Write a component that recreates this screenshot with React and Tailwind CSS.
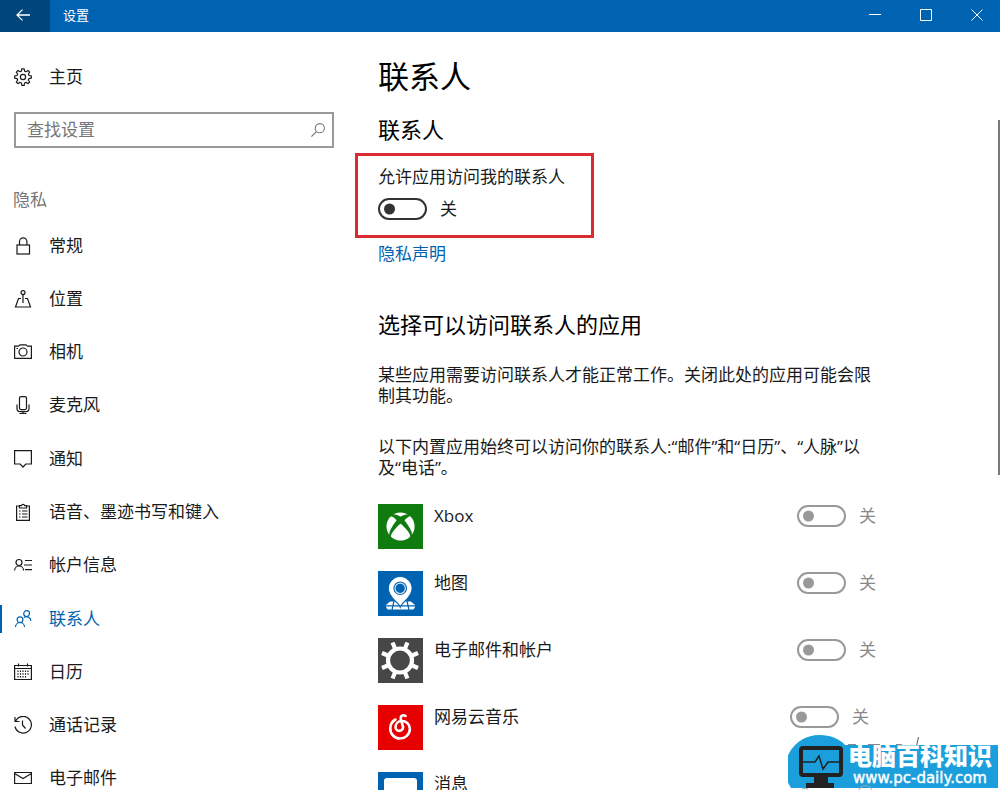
import React, { useState } from "react";
import { FaXbox } from "react-icons/fa";

const Icon = ({ children }) => (
  <svg
    viewBox="0 0 18 18"
    className="h-[18px] w-[18px] shrink-0"
    fill="none"
    stroke="currentColor"
    strokeWidth="1.2"
    aria-hidden="true"
  >
    {children}
  </svg>
);

const GearIcon = () => (
  <Icon>
    <circle cx="9" cy="9" r="2.6" />
    <path
      strokeLinejoin="round"
      d="M7.4 3.1 7.8.8h2.4l.4 2.3 1.5.6 1.9-1.3 1.7 1.7-1.4 1.9.7 1.5 2.3.4v2.3l-2.3.4-.7 1.5 1.4 1.9-1.7 1.7-1.9-1.4-1.5.7-.4 2.3H7.8L7.4 15l-1.5-.7L4 15.7 2.3 14l1.4-1.9-.7-1.5-2.3-.4V7.9l2.3-.4.7-1.5-1.4-1.9L4 2.4l1.9 1.3z"
    />
  </Icon>
);

const LockIcon = () => (
  <Icon>
    <rect x="3" y="8" width="12.5" height="9" />
    <path d="M5.5 8V4.5a3.7 3.7 0 0 1 7.4 0V8" />
  </Icon>
);

const LocationIcon = () => (
  <Icon>
    <circle cx="9" cy="2.6" r="2" />
    <path d="M9 4.6V13M7 8.5H4.5L1.500 17h15l-3-8.5H11" />
  </Icon>
);

const CameraIcon = () => (
  <Icon>
    <path d="M.6 3.1H4.5L6 1.8h6l1.5 1.3h3.9v12.3H.6z" />
    <circle cx="9" cy="9" r="4" />
    <path d="M2.5 5.5h1.5" />
  </Icon>
);

const MicIcon = () => (
  <Icon>
    <rect x="5.5" y=".6" width="7" height="13" rx="1.5" />
    <path d="M3 8.5v4.5a2.5 2.5 0 0 0 2.5 2.5h7a2.5 2.5 0 0 0 2.5-2.5V8.5M9 15.5v2M5.5 17.4h7" />
  </Icon>
);

const NotifyIcon = () => (
  <Icon>
    <path d="M.6.6h16.800v13.400h-5.600L9 17l-2.800-3H.6z" />
  </Icon>
);

const ClipboardIcon = () => (
  <Icon>
    <path d="M6 3H2.600v14.400h12.800V3H12M5.500 5V2.700h1.900a1.700 1.700 0 0 1 3.300 0h1.900V5z" />
    <path d="M5 8h1.500M8 8h5.500M5 11h1.500M8 11h5.500M5 14h1.500M8 14h5.500" />
  </Icon>
);

const AccountIcon = () => (
  <Icon>
    <circle cx="5" cy="6.500" r="3" />
    <path d="M.6 14.500a4.500 4.500 0 0 1 9 0M11 4.500h7M10 9h8M11 13.600h7" />
  </Icon>
);

const PeopleIcon = () => (
  <Icon>
    <circle cx="6" cy="9.700" r="2.900" />
    <path d="M1.500 17a4.500 4.500 0 0 1 9 0" />
    <circle cx="12.600" cy="3.600" r="2.900" />
    <path d="M9.800 7.600a4.400 4.400 0 0 1 7.100 3.400" />
  </Icon>
);

const CalendarIcon = () => (
  <Icon>
    <path d="M.6 2.500h16.800v14H.6zM.6 5.500h16.800M4.500.5v3M13.500.5v3" />
    <path strokeDasharray="1.5 1.2" d="M4 7.500v7.500M6.500 7.500v7.500M9 7.500v7.500M11.500 7.500v7.500M14 7.500v5" />
  </Icon>
);

const HistoryIcon = () => (
  <Icon>
    <path d="M1.700 5A8.300 8.300 0 1 1 1 10.500M1 1v4.500h4.500M8.500 4.500V9l3 3.500" />
  </Icon>
);

const MailIcon = () => (
  <Icon>
    <path d="M.6 3.500h16.800v11H.6zM.6 4.500 9 9.500l8.400-5" />
  </Icon>
);

const MapsLogo = () => (
  <svg viewBox="0 0 45 45" className="h-full w-full" aria-hidden="true">
    <path
      d="M12 31h21l4 3.500-1.500 3.500H9.500L8 34.500z"
      fill="#fff"
      stroke="#fff"
      strokeLinejoin="round"
    />
    <path d="M7 34.800h31M16 30l-2 9M29 30l2 9" stroke="#0063b1" strokeWidth="1.2" />
    <path
      d="M22.200 36c-1.500-5-12-9-12-18.500a12 12 0 0 1 24 0C34.200 27 23.700 31 22.200 36z"
      fill="#fff"
      stroke="#0063b1"
      strokeWidth="1.2"
    />
    <circle cx="22.2" cy="17.3" r="6.8" fill="#0063b1" />
    <circle cx="22.2" cy="17.3" r="5.2" fill="none" stroke="#d5e6f5" strokeWidth="1.2" />
  </svg>
);

const SettingsLogo = () => (
  <svg viewBox="0 0 45 45" className="h-full w-full" stroke="#fff" fill="none" aria-hidden="true">
    <circle cx="22" cy="22.5" r="12" strokeWidth="4.2" />
    {[22.5, 67.5, 112.5, 157.5, 202.5, 247.5, 292.5, 337.5].map((angle) => (
      <path key={angle} d="M22 10V3" strokeWidth="4.2" transform={`rotate(${angle} 22 22.5)`} />
    ))}
  </svg>
);

const MusicLogo = () => (
  <svg
    viewBox="0 0 45 45"
    className="h-full w-full"
    fill="none"
    stroke="#fff"
    strokeWidth="2.6"
    strokeLinecap="round"
    aria-hidden="true"
  >
    <path d="M17.500 14.500A10 10 0 0 0 12.300 23.500a9.800 9.800 0 0 0 19.600.5c0-5-3.800-8-8-8-4 0-6.400 2.800-6.400 6a3.800 3.800 0 0 0 7.600.2L22.800 14c-.5-3.500 2.200-4.700 4.800-3" />
  </svg>
);

const MessageLogo = () => (
  <svg viewBox="0 0 45 45" className="h-full w-full" aria-hidden="true">
    <path d="M9 6h27a3 3 0 0 1 3 3v20a3 3 0 0 1-3 3H20l-8 7v-7H9a3 3 0 0 1-3-3V9a3 3 0 0 1 3-3z" fill="#fff" />
  </svg>
);

const navItems = [
  { label: "常规", icon: LockIcon },
  { label: "位置", icon: LocationIcon },
  { label: "相机", icon: CameraIcon },
  { label: "麦克风", icon: MicIcon },
  { label: "通知", icon: NotifyIcon },
  { label: "语音、墨迹书写和键入", icon: ClipboardIcon },
  { label: "帐户信息", icon: AccountIcon },
  { label: "联系人", icon: PeopleIcon, active: true },
  { label: "日历", icon: CalendarIcon },
  { label: "通话记录", icon: HistoryIcon },
  { label: "电子邮件", icon: MailIcon },
];

const apps = [
  { id: "xbox", name: "Xbox", tile: "bg-[#107c10]", logo: <FaXbox className="h-[29px] w-[29px] text-white" /> },
  { id: "maps", name: "地图", tile: "bg-[#0063b1]", logo: <MapsLogo /> },
  { id: "mail", name: "电子邮件和帐户", tile: "bg-[#474747]", logo: <SettingsLogo /> },
  { id: "music", name: "网易云音乐", tile: "bg-[#e60000]", logo: <MusicLogo />, shifted: true },
  { id: "message", name: "消息", tile: "bg-[#0063b1]", logo: <MessageLogo />, noToggle: true },
];

const Toggle = ({ id, ...props }) => (
  <input
    id={id}
    type="checkbox"
    role="switch"
    className="relative h-[22px] w-[49px] shrink-0 appearance-none rounded-full border-2 border-[#333] before:absolute before:top-1/2 before:left-1 before:h-[11px] before:w-[11px] before:-translate-y-1/2 before:rounded-full before:bg-[#333] disabled:border-[#999] disabled:before:bg-[#999]"
    {...props}
  />
);

const TitleBar = () => (
  <header className="flex h-8 shrink-0 items-center bg-[#0063b1] text-white">
    <button aria-label="返回" className="flex h-full w-[50px] items-center justify-center bg-[#00457c] pr-1 pb-0.5">
      <svg viewBox="0 0 14 12" className="h-3 w-[14px]" fill="none" stroke="currentColor" strokeWidth="1.3">
        <path d="M14 6H1M6.500.6 1 6l5.500 5.400" />
      </svg>
    </button>
    <span className="ml-[13px] flex-1 pb-0.5 text-[13px]">设置</span>
    <div className="flex h-full gap-[5px]">
      <button aria-label="最小化" className="flex w-[46px] items-center justify-center pb-0.5">
        <svg viewBox="0 0 12 12" className="h-3 w-3" stroke="currentColor">
          <path d="M0 5.500h12" />
        </svg>
      </button>
      <button aria-label="最大化" className="flex w-[46px] items-center justify-center pb-0.5">
        <svg viewBox="0 0 12 12" className="h-3 w-3" fill="none" stroke="currentColor">
          <path d="M.5.5h11v11H.5z" />
        </svg>
      </button>
      <button aria-label="关闭" className="flex w-[46px] items-center justify-center pb-0.5">
        <svg viewBox="0 0 12 12" className="h-3 w-3" stroke="currentColor">
          <path d="M.5.5l11 11M11.500.5l-11 11" />
        </svg>
      </button>
    </div>
  </header>
);

const Sidebar = () => (
  <aside className="w-[348px] shrink-0 pt-[31px]">
    <a href="#home" className="flex h-7 items-center gap-[17px] pl-[14px]">
      <GearIcon />
      主页
    </a>
    <div className="relative mt-[21px] ml-[14px] w-80">
      <input
        type="text"
        aria-label="查找设置"
        placeholder="查找设置"
        className="block h-9 w-full border-2 border-[#999] pr-9 pb-0.5 pl-[11px] outline-none placeholder:text-[#767676]"
      />
      <svg
        viewBox="0 0 14 14"
        className="absolute top-[11px] right-[9px] h-[14px] w-[14px]"
        fill="none"
        stroke="#777"
        strokeWidth="1.1"
        aria-hidden="true"
      >
        <circle cx="8.8" cy="5.2" r="4.6" />
        <path d="M5.500 8.500.4 13.600" />
      </svg>
    </div>
    <h2 className="mt-10 pl-[13px] text-[#767676]">隐私</h2>
    <nav className="mt-[7px] grid h-[586px] auto-rows-fr items-center">
      {navItems.map(({ label, icon: NavIcon, active }) => (
        <a
          key={label}
          href={`#${label}`}
          aria-current={active ? "page" : undefined}
          className={
            active
              ? "flex h-7 items-center gap-[17px] border-l-2 border-[#0063b1] pl-3 text-[#0063b1]"
              : "flex h-7 items-center gap-[17px] pl-[14px]"
          }
        >
          <NavIcon />
          {label}
        </a>
      ))}
    </nav>
  </aside>
);

const AppRow = ({ app }) => (
  <li className="flex h-[45px] items-start">
    <span className={`flex h-[45px] w-[45px] items-center justify-center ${app.tile}`}>{app.logo}</span>
    <label htmlFor={app.id} className="ml-[11px] flex-1">
      {app.name}
    </label>
    {!app.noToggle && (
      <div className={app.shifted ? "mr-[7px] flex items-center gap-[13px]" : "flex items-center gap-[13px]"}>
        <Toggle id={app.id} disabled />
        <span className="text-[#888]">关</span>
      </div>
    )}
  </li>
);

const Watermark = () => (
  <div className="absolute right-0.5 bottom-0 flex h-14 w-[210px] items-start justify-end">
    <svg viewBox="0 0 210 56" className="absolute inset-0 h-full w-full" aria-hidden="true">
      <path d="M130.500 3l-2 9" stroke="#555" />
      <path d="M60 10.500h8M80 10.500h12M108 10.500h6" stroke="#888" />
      <path d="M3 54A34 34 0 0 1 32 1c10 0 20 4 25 10h153v43z" fill="#1b9fdc" />
      <path d="M14 55q3-1 6 0M71 56a7 7 0 0 1 13 0" fill="none" stroke="#aaa" />
      <rect x="13" y="14" width="40" height="27" rx="2" fill="none" stroke="#222" strokeWidth="4" />
      <path d="M26 42h14v7h6v5H18v-5h8z" fill="#222" />
      <path d="M15 28h12l4-6 4 13 5-7h12" fill="none" stroke="#222" strokeWidth="1.5" />
    </svg>
    <div className="relative w-[150px] pt-2 whitespace-nowrap text-white">
      <p className="text-[24px] leading-7 font-black">电脑百科知识</p>
      <p className="pl-[5px] font-['DejaVu_Sans'] text-[15px] leading-4 font-medium [-webkit-text-stroke:0.4px_white]">
        www.pc-daily.com
      </p>
    </div>
  </div>
);

const App = () => {
  const [allowed, setAllowed] = useState(false);

  return (
    <div className="relative flex h-screen flex-col overflow-hidden bg-white font-['Open_Sans','Noto_Sans_CJK_SC',sans-serif] text-[17px] leading-6 text-[#1a1a1a]">
      <TitleBar />
      <div className="flex min-h-0 flex-1 overflow-hidden">
        <Sidebar />
        <main className="min-w-0 flex-1 pt-6 pl-[30px]">
          <h1 className="text-[31px] leading-10 text-black">联系人</h1>
          <h2 className="mt-[19px] text-[22px] leading-7 text-black">联系人</h2>
          <section className="mt-[10px] -ml-[23px] w-[239px] border-3 border-[#dc2a33] px-5 pt-[9px] pb-[14px]">
            <label htmlFor="allow-contacts">允许应用访问我的联系人</label>
            <div className="mt-2 flex items-center gap-[13px]">
              <Toggle id="allow-contacts" checked={allowed} onChange={(e) => setAllowed(e.target.checked)} />
              <span>{allowed ? "开" : "关"}</span>
            </div>
          </section>
          <a href="#privacy" className="mt-1 block w-fit text-[#0063b1]">
            隐私声明
          </a>

          <h2 className="mt-11 text-[22px] leading-7 text-black">选择可以访问联系人的应用</h2>
          <div className="max-w-[498px]">
            <p className="mt-[26px] leading-[21px]">
              某些应用需要访问联系人才能正常工作。关闭此处的应用可能会限制其功能。
            </p>
            <p className="mt-[30px] leading-[21px]">
              以下内置应用始终可以访问你的联系人:“邮件”和“日历”、“人脉”以及“电话”。
            </p>
            <ul className="mt-[26px] flex flex-col gap-[22px]">
              {apps.map((app) => (
                <AppRow key={app.id} app={app} />
              ))}
            </ul>
          </div>
        </main>
      </div>
      <div className="absolute top-[120px] right-0 h-[355px] w-0.5 bg-[#7a7a7a]" />
      <Watermark />
    </div>
  );
};

export default App;
